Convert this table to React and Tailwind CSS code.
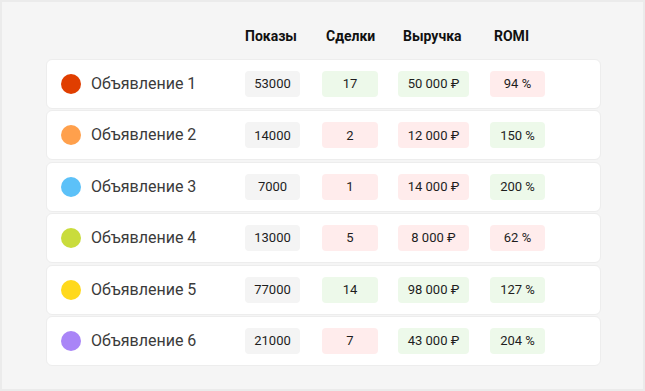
const ROWS = [
  { name: "Объявление 1", dot: "bg-[#e03e00]", shows: "53000", deals: "17", dealsOk: true, revenue: "50 000 ₽", revOk: true, romi: "94 %", romiOk: false },
  { name: "Объявление 2", dot: "bg-[#ffa04c]", shows: "14000", deals: "2", dealsOk: false, revenue: "12 000 ₽", revOk: false, romi: "150 %", romiOk: true },
  { name: "Объявление 3", dot: "bg-[#5cc1f8]", shows: "7000", deals: "1", dealsOk: false, revenue: "14 000 ₽", revOk: false, romi: "200 %", romiOk: true },
  { name: "Объявление 4", dot: "bg-[#c9dc3c]", shows: "13000", deals: "5", dealsOk: false, revenue: "8 000 ₽", revOk: false, romi: "62 %", romiOk: false },
  { name: "Объявление 5", dot: "bg-[#ffd91c]", shows: "77000", deals: "14", dealsOk: true, revenue: "98 000 ₽", revOk: true, romi: "127 %", romiOk: true },
  { name: "Объявление 6", dot: "bg-[#a985f7]", shows: "21000", deals: "7", dealsOk: false, revenue: "43 000 ₽", revOk: true, romi: "204 %", romiOk: true },
];

const tone = (ok) => (ok ? "bg-[#edf9ea]" : "bg-[#ffecec]");

const Pill = ({ className, children }) => (
  <div className={`h-[26px] rounded-[4px] flex items-center justify-center text-[13px] text-[#1e1e1e] ${className}`}>
    {children}
  </div>
);

export default function App() {
  return (
    <div className="w-[645px] h-[391px] bg-[#f5f5f5] border-2 border-[#ebebeb] font-['Roboto',sans-serif] pl-[44px] pt-[23px]">
      {/* Header */}
      <div className="flex items-center h-[22px] pl-[199px] text-[14px] font-bold text-[#111]">
        <div className="w-[81px]">Показы</div>
        <div className="w-[77px]">Сделки</div>
        <div className="w-[91px]">Выручка</div>
        <div>ROMI</div>
      </div>

      {/* Rows */}
      <div className="flex flex-col gap-[1.4px] mt-[12px] w-[555px]">
        {ROWS.map((r) => (
          <div key={r.name} className="h-[50px] bg-white rounded-[6px] border border-[#ededed] flex items-center pl-[14px]">
            <div className={`w-[20px] h-[20px] rounded-full shrink-0 ${r.dot}`} />
            <div className="w-[154px] ml-[10px] text-[16px] text-[#3b3b3b]">{r.name}</div>
            <Pill className="w-[55px] bg-[#f4f4f4]">{r.shows}</Pill>
            <Pill className={`w-[56px] ml-[22px] ${tone(r.dealsOk)}`}>{r.deals}</Pill>
            <Pill className={`w-[71px] ml-[20px] ${tone(r.revOk)}`}>{r.revenue}</Pill>
            <Pill className={`w-[55px] ml-[21px] ${tone(r.romiOk)}`}>{r.romi}</Pill>
          </div>
        ))}
      </div>
    </div>
  );
}
